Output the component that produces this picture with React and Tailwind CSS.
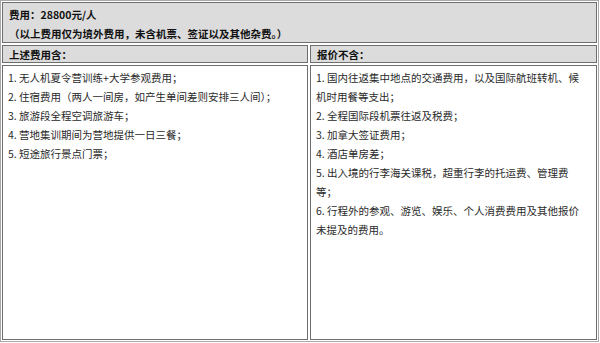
import React from 'react'

const included = [
    '1. 无人机夏令营训练+大学参观费用；',
    '2. 住宿费用（两人一间房，如产生单间差则安排三人间）；',
    '3. 旅游段全程空调旅游车；',
    '4. 营地集训期间为营地提供一日三餐；',
    '5. 短途旅行景点门票；',
]

// each entry is a list of the lines it breaks into
const excluded = [
    ['1. 国内往返集中地点的交通费用，以及国际航班转机、候', '机时用餐等支出；'],
    ['2. 全程国际段机票往返及税费；'],
    ['3. 加拿大签证费用；'],
    ['4. 酒店单房差；'],
    ['5. 出入境的行李海关课税，超重行李的托运费、管理费', '等；'],
    ['6. 行程外的参观、游览、娱乐、个人消费费用及其他报价', '未提及的费用。'],
]

const HeadCell = ({ children }) => (
    <div className="border border-[#6e6e6e] bg-[#dcdcdc] px-[6px] pt-px leading-[15px] font-bold text-[#111]">
        {children}
    </div>
)

const BodyCell = ({ children }) => (
    <div className="flex-1 border border-[#6e6e6e] bg-white px-[5px] pt-[2px] leading-[19px] text-[#2a2a2a]">
        {children}
    </div>
)

const PriceTable = () => (
    <div
        className="w-[599px] h-[342px] border border-[#a9a9a9] p-px flex flex-col gap-[2px] bg-white text-[10.5px] whitespace-nowrap"
        style={{ fontFamily: '"Noto Sans CJK SC", "Noto Sans", sans-serif' }}
    >
        <div className="border border-[#6e6e6e] bg-[#dcdcdc] px-[6px] pt-[2px] leading-[19px] font-bold text-[#111] h-[41px]">
            <div>费用：28800元/人</div>
            <div>（以上费用仅为境外费用，未含机票、签证以及其他杂费。）</div>
        </div>
        <div className="flex-1 flex gap-[2px] min-h-0">
            <div className="w-[306px] flex flex-col gap-[2px]">
                <HeadCell>上述费用含：</HeadCell>
                <BodyCell>
                    {included.map(line => <div key={line}>{line}</div>)}
                </BodyCell>
            </div>
            <div className="flex-1 flex flex-col gap-[2px]">
                <HeadCell>报价不含：</HeadCell>
                <BodyCell>
                    {excluded.map(lines => (
                        <div key={lines[0]}>
                            {lines.map(l => <div key={l}>{l}</div>)}
                        </div>
                    ))}
                </BodyCell>
            </div>
        </div>
    </div>
)

export default function App() {
    return <PriceTable />
}
